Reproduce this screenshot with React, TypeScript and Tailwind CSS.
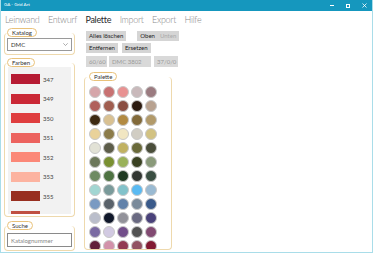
import React from 'react';

const menu = ['Leinwand', 'Entwurf', 'Palette', 'Import', 'Export', 'Hilfe'];

const farben = [
  { code: '347', color: '#b61b33' },
  { code: '349', color: '#ca2836' },
  { code: '350', color: '#df3e3f' },
  { code: '351', color: '#ec635f' },
  { code: '352', color: '#fb8878' },
  { code: '353', color: '#fcb3a0' },
  { code: '355', color: '#982f20' },
  { code: '356', color: '#c05042' },
];

const palette = [
  ['#d6a6aa', '#c87272', '#e89292', '#c9b9bb', '#9b7b80'],
  ['#b0605a', '#a05e50', '#8a4e42', '#2c1b10', '#b8a290'],
  ['#3d2a12', '#d9c192', '#b28a42', '#826a3a', '#b29a6a'],
  ['#e9d29a', '#8c7c4a', '#f1e6c2', '#d1cdc3', '#d2c282'],
  ['#e2e2d6', '#5d5d4a', '#c1b262', '#6a6a3a', '#4a4e3a'],
  ['#6c785a', '#7a9032', '#9ab25a', '#3a4222', '#8a9a7a'],
  ['#6e8a62', '#4e7242', '#203a22', '#323632', '#3a4e42'],
  ['#a2d6d2', '#7a9a9a', '#82c2ca', '#5abaf2', '#9abad2'],
  ['#7a9ac2', '#5a626a', '#6282aa', '#7a8a9a', '#3a5a8a'],
  ['#babecb', '#10182a', '#92929a', '#6a6a82', '#4a427a'],
  ['#7a6aa2', '#d2cae2', '#724e8a', '#525252', '#824a72'],
  ['#62203a', '#d292aa', '#923a52', '#925262', '#821a32'],
];

function Pill({ label, className = 'ml-[3px]' }: { label: string; className?: string }) {
  return (
    <span
      className={`relative z-10 self-start rounded-full border border-[#e9c27a] bg-white px-[4px] text-[6px] leading-[7px] text-[#333] ${className}`}
    >
      {label}
    </span>
  );
}

export default function App() {
  return (
    <div
      className="flex h-[253px] w-[373px] flex-col overflow-hidden border-x border-b border-[#a9dde9] bg-white text-[#222]"
      style={{ fontFamily: 'Lato, "Open Sans", sans-serif' }}
    >
      {/* Title bar */}
      <div className="flex h-[11px] shrink-0 items-center bg-[#1597be] pl-[3px] pr-[5px] text-white">
        <span className="text-[4.5px] leading-none">GA - Grid Art</span>
        <div className="ml-auto flex items-center gap-[12px]">
          <span className="block h-px w-[4px] bg-white" />
          <span className="block h-[4px] w-[4px] border border-white" />
          <svg width="5" height="5" viewBox="0 0 5 5" stroke="white" strokeWidth="0.8">
            <path d="M0.5 0.5 L4.5 4.5 M4.5 0.5 L0.5 4.5" />
          </svg>
        </div>
      </div>

      {/* Menu */}
      <div className="flex h-[17px] shrink-0 items-center gap-[8.5px] pl-[4px] pt-[1px] text-[9px] font-light tracking-[-0.3px] text-[#8a8a8a]">
        {menu.map((m) => (
          <span key={m} className={m === 'Palette' ? 'font-normal text-[#2a2a2a]' : ''}>
            {m}
          </span>
        ))}
      </div>

      <div className="flex min-h-0 flex-1">
        {/* Left column */}
        <div className="flex w-[80px] shrink-0 flex-col pl-[3px]">
          {/* Katalog */}
          <div className="flex flex-col">
            <Pill label="Katalog" />
            <div className="-mt-[4px] w-[71px] rounded-[4px] border border-t-0 border-[#eed9ad] px-[2px] pb-[3px] pt-[5px]">
              <div className="flex h-[13px] items-center justify-between border border-[#9a9a9a] bg-white px-[3px] text-[6px] text-[#333]">
                <span>DMC</span>
                <svg width="5" height="3" viewBox="0 0 5 3" fill="none" stroke="#777" strokeWidth="0.6">
                  <path d="M0.3 0.3 L2.5 2.5 L4.7 0.3" />
                </svg>
              </div>
            </div>
          </div>

          {/* Farben */}
          <div className="mt-[3px] flex flex-col">
            <Pill label="Farben" />
            <div className="-mt-[4px] w-[71px] rounded-[4px] border border-t-0 border-[#eed9ad] px-[3px] pb-[2px] pt-[4px]">
              <div className="flex h-[147px] flex-col gap-[9.5px] overflow-hidden bg-[#f2f2f2] pl-[3px] pt-[7px]">
                {farben.map((f) => (
                  <div key={f.code} className="flex shrink-0 items-center gap-[3px]">
                    <span className="block h-[10px] w-[29px] shrink-0" style={{ backgroundColor: f.color }} />
                    <span className="text-[6px] text-[#444]">{f.code}</span>
                  </div>
                ))}
              </div>
            </div>
          </div>

          {/* Suche */}
          <div className="mt-[4px] flex flex-col">
            <Pill label="Suche" />
            <div className="-mt-[4px] w-[71px] rounded-[4px] border border-t-0 border-[#eed9ad] px-[2px] pb-[3px] pt-[7px]">
              <div className="flex h-[14px] items-center border border-[#8a8a8a] bg-white px-[3px] text-[6px] text-[#888]">
                Katalognummer
              </div>
            </div>
          </div>
        </div>

        {/* Right column */}
        <div className="flex flex-col pl-[3px] pt-[3px]">
          <div className="flex items-center gap-[11px] pl-[2px]">
            <button className="h-[10px] bg-[#d5d5d5] px-[3px] text-[6px] leading-[10px] text-[#222]">Alles löschen</button>
            <div className="flex h-[10px] bg-[#d5d5d5] px-[3px] text-[6px] leading-[10px]">
              <span className="text-[#222]">Oben</span>
              <span className="ml-[5px] text-[#aaa]">Unten</span>
            </div>
          </div>
          <div className="mt-[2px] flex gap-[4px] pl-[2px]">
            <button className="h-[10px] bg-[#d5d5d5] px-[3px] text-[6px] leading-[10px] text-[#222]">Entfernen</button>
            <button className="h-[10px] bg-[#d5d5d5] px-[3px] text-[6px] leading-[10px] text-[#222]">Ersetzen</button>
          </div>
          <div className="mt-[3px] flex gap-[2px] pl-[2px] text-[6px] leading-[11px] text-[#9a9a9a]">
            <span className="h-[11px] w-[21px] bg-[#d9d9d9] px-[3px]">60/60</span>
            <span className="h-[11px] w-[42px] bg-[#d9d9d9] px-[3px]">DMC 3802</span>
            <span className="ml-[1px] h-[11px] w-[24px] bg-[#d9d9d9] px-[3px]">37/0/0</span>
          </div>

          {/* Palette */}
          <div className="mt-[5px] flex flex-col">
            <Pill label="Palette" className="ml-[5px]" />
            <div className="-mt-[4px] h-[173px] w-[88px] overflow-hidden rounded-[4px] border border-t-0 border-[#eed9ad] pl-[4px] pt-[9px]">
              <div className="grid grid-cols-[repeat(5,12px)] gap-[2px]">
                {palette.flat().map((c, i) => (
                  <span
                    key={i}
                    className="block h-[12px] w-[12px] rounded-full border border-[#c8c8c8]"
                    style={{ backgroundColor: c }}
                  />
                ))}
              </div>
            </div>
          </div>
        </div>
      </div>
    </div>
  );
}
